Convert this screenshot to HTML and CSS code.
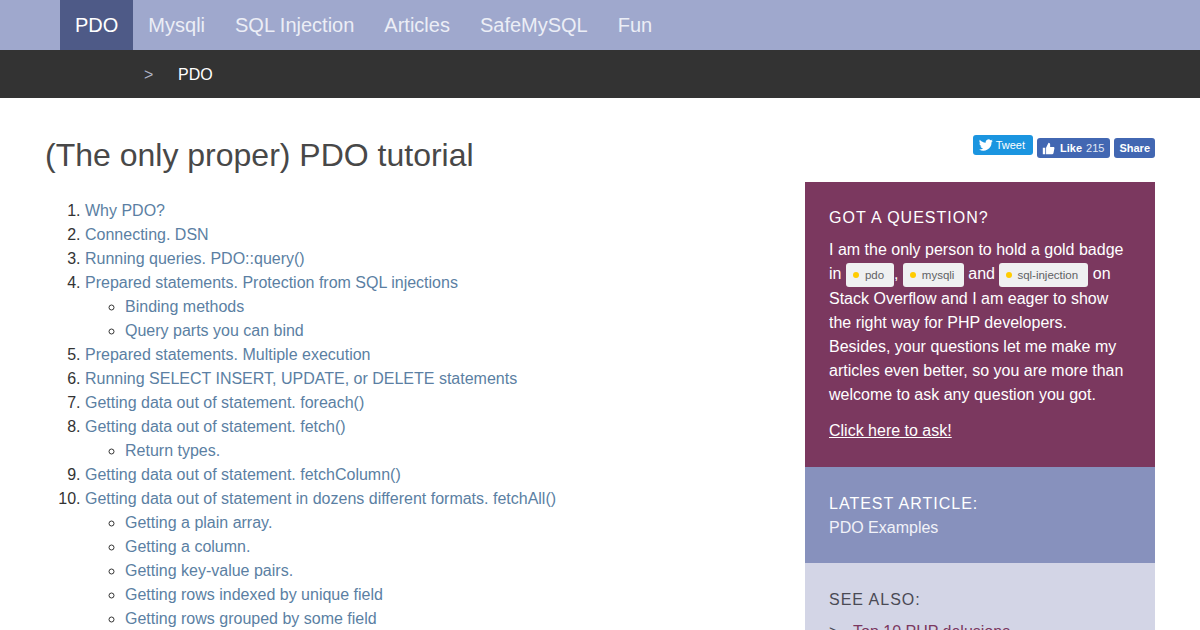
FILE: index.html
```html
<!DOCTYPE html>
<html lang="en">
<head>
<meta charset="utf-8">
<title>(The only proper) PDO tutorial</title>
<link rel="stylesheet" href="styles.css">
</head>
<body>
<nav class="topnav">
  <a class="topnav-item active" href="#">PDO</a>
  <a class="topnav-item" href="#">Mysqli</a>
  <a class="topnav-item" href="#">SQL Injection</a>
  <a class="topnav-item" href="#">Articles</a>
  <a class="topnav-item" href="#">SafeMySQL</a>
  <a class="topnav-item" href="#">Fun</a>
</nav>
<div class="crumbs"><span class="crumb-sep">&gt;</span><span class="crumb">PDO</span></div>
<main class="page">
  <div class="content">
    <h1 class="title">(The only proper) PDO tutorial</h1>
    <ol class="toc">
      <li><a href="#">Why PDO?</a></li>
      <li><a href="#">Connecting. DSN</a></li>
      <li><a href="#">Running queries. PDO::query()</a></li>
      <li><a href="#">Prepared statements. Protection from SQL injections</a>
        <ul><li><a href="#">Binding methods</a></li><li><a href="#">Query parts you can bind</a></li></ul></li>
      <li><a href="#">Prepared statements. Multiple execution</a></li>
      <li><a href="#">Running SELECT INSERT, UPDATE, or DELETE statements</a></li>
      <li><a href="#">Getting data out of statement. foreach()</a></li>
      <li><a href="#">Getting data out of statement. fetch()</a>
        <ul><li><a href="#">Return types.</a></li></ul></li>
      <li><a href="#">Getting data out of statement. fetchColumn()</a></li>
      <li><a href="#">Getting data out of statement in dozens different formats. fetchAll()</a>
        <ul>
          <li><a href="#">Getting a plain array.</a></li>
          <li><a href="#">Getting a column.</a></li>
          <li><a href="#">Getting key-value pairs.</a></li>
          <li><a href="#">Getting rows indexed by unique field</a></li>
          <li><a href="#">Getting rows grouped by some field</a></li>
        </ul></li>
    </ol>
  </div>
  <aside class="side">
    <div class="social">
      <a class="btn btn-tw" href="#"><svg class="tw-ico" viewBox="0 0 24 24"><path fill="#fff" d="M23.6 4.6c-.9.4-1.8.7-2.8.8 1-.6 1.8-1.6 2.1-2.7-.9.6-2 1-3.1 1.2A4.9 4.9 0 0 0 11.500 8.300C7.400 8.100 3.800 6.100 1.400 3.200c-1.300 2.200-.7 5.100 1.500 6.500-.8 0-1.600-.2-2.200-.6 0 2.300 1.600 4.400 3.900 4.900-.7.200-1.500.2-2.200.1.600 2 2.400 3.400 4.600 3.400A9.900 9.900 0 0 1 0 19.500 14 14 0 0 0 21.500 7.100c1-.7 1.800-1.500 2.100-2.500z"/></svg>Tweet</a>
      <a class="btn btn-fb" href="#"><svg class="fb-ico" viewBox="0 0 16 16"><path fill="#fff" d="M1 7h3v8H1zM5 7l3-6c1.300 0 2 .9 2 2v3h4c1 0 1.500.8 1.300 1.700l-1.200 6c-.2.800-.8 1.300-1.600 1.300H5z"/></svg><b>Like</b><span class="count">215</span></a>
      <a class="btn btn-fb btn-share" href="#"><b>Share</b></a>
    </div>
    <section class="panel panel-q">
      <h3 class="panel-h">GOT A QUESTION?</h3>
      <p class="panel-p">I am the only person to hold a gold badge in <span class="tag tag-pdo"><i class="dot"></i>pdo</span>, <span class="tag tag-my"><i class="dot"></i>mysqli</span> and <span class="tag tag-sql"><i class="dot"></i>sql-injection</span> on Stack Overflow and I am eager to show the right way for PHP developers. Besides, your questions let me make my articles even better, so you are more than welcome to ask any question you got.</p>
      <p class="panel-link"><a href="#">Click here to ask!</a></p>
    </section>
    <section class="panel panel-l">
      <h3 class="panel-h">LATEST ARTICLE:</h3>
      <a class="latest" href="#">PDO Examples</a>
    </section>
    <section class="panel panel-s">
      <h3 class="panel-h">SEE ALSO:</h3>
      <div class="also"><span class="also-sep">&gt;</span><a href="#">Top 10 PHP delusions</a></div>
    </section>
  </aside>
</main>
</body>
</html>
```
FILE: styles.css
```css
html, body { margin: 0; padding: 0; height: 630px; overflow: hidden; background: #fff; }
body { font-family: "Liberation Sans", Arial, sans-serif; font-size: 16px; line-height: 24px; color: #333; }
a { text-decoration: none; }

.topnav { display: flex; height: 50px; padding-left: 60px; background: #9fa8cd; }
.topnav-item { padding: 0 15px; font-size: 20px; line-height: 50px; color: #eceef6; }
.topnav-item.active { background: #4e5a87; color: #fff; }

.crumbs { display: flex; box-sizing: border-box; height: 48px; padding: 1px 0 0 144px; align-items: center; background: #333; }
.crumb-sep { width: 34px; color: #aeb3c6; }
.crumb { color: #fff; }

.page { display: flex; justify-content: space-between; height: 532px; padding: 0 45px; overflow: hidden; }
.content { flex: none; width: 750px; }
.title { margin: 37px 0 0; font-size: 32px; font-weight: 400; line-height: 40px; color: #484848; }
.toc { margin: 24px 0 0; padding: 0 0 0 40px; }
.toc ul { margin: 0; padding: 0 0 0 40px; }
.toc a { color: #5b7fa3; }

.side { flex: none; width: 350px; }
.social { display: flex; justify-content: flex-end; align-items: flex-end; gap: 4px; height: 84px; padding-bottom: 24px; box-sizing: border-box; }
.btn { display: flex; align-items: center; border-radius: 3px; color: #fff; font-size: 11px; line-height: 20px; height: 20px; }
.btn-tw { margin-bottom: 3px; padding: 0 8px 0 6px; background: #1b95e0; }
.tw-ico { width: 14px; height: 14px; margin-right: 3px; }
.btn-fb { padding: 0 5px; background: #4267b2; }
.fb-ico { width: 13px; height: 13px; margin-right: 5px; }
.count { margin: 0 1px 0 4px; color: #e3e8f5; font-weight: 400; }

.panel { box-sizing: border-box; padding: 0 24px; }
.panel-h { margin: 0; font-size: 16px; font-weight: 400; letter-spacing: 1px; line-height: 24px; }
.panel-q { height: 285px; padding-top: 24px; background: #7b385f; color: #fff; }
.panel-q .panel-h { color: #fff; }
.panel-p { margin: 8px 0 0; }
.panel-link { margin: 12px 0 0; }
.panel-link a { color: #fff; text-decoration: underline; }
.tag { display: inline-flex; align-items: center; box-sizing: border-box; height: 24px; padding-left: 7px; border-radius: 3px; background: #eff0f1; color: #5f6265; font-size: 11.500px; line-height: 14px; vertical-align: middle; }
.tag-pdo { width: 48px; }
.tag-my { width: 61px; }
.tag-sql { width: 89px; }
.dot { width: 6px; height: 6px; margin-right: 6px; border-radius: 50%; background: #ffcc01; }
.tag-sql .dot { margin-right: 5px; }

.panel-l { height: 96px; padding-top: 25px; background: #8791bd; color: #fff; }
.latest { color: #f1f2f8; }
.panel-s { height: 67px; padding-top: 25px; background: #d3d5e6; color: #4a4a55; }
.also { display: flex; margin-top: 8px; }
.also-sep { width: 24px; color: #4a4a55; }
.also a { color: #7b385f; }
```
